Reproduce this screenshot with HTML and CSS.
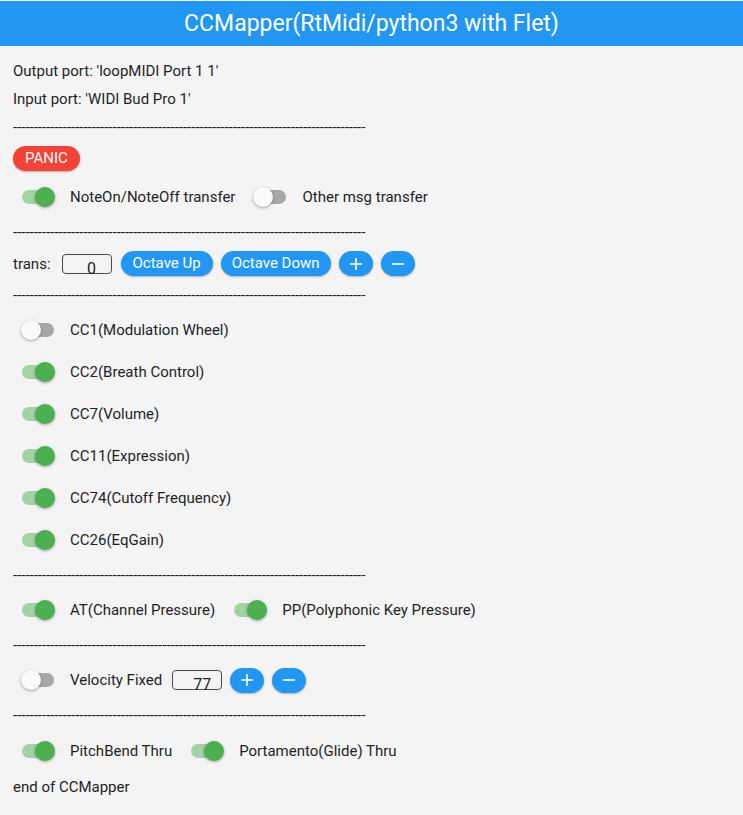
FILE: index.html
```html
<!DOCTYPE html>
<html lang="en">
<head>
<meta charset="utf-8">
<title>CCMapper</title>
<link rel="stylesheet" href="styles.css">
</head>
<body>
<div class="app">
  <header class="appbar"><h1 class="title">CCMapper(RtMidi/python3 with Flet)</h1></header>
  <main class="content">
    <div class="line">Output port: 'loopMIDI Port 1 1'</div>
    <div class="line">Input port: 'WIDI Bud Pro 1'</div>
    <div class="line dash">-------------------------------------------------------------------------------------</div>
    <div class="row"><button class="btn btn-red">PANIC</button></div>
    <div class="row srow">
      <label class="sw"><span class="track on"><span class="thumb"></span></span><span class="lbl">NoteOn/NoteOff transfer</span></label>
      <label class="sw"><span class="track"><span class="thumb"></span></span><span class="lbl">Other msg transfer</span></label>
    </div>
    <div class="line dash">-------------------------------------------------------------------------------------</div>
    <div class="row brow">
      <span class="txt trans">trans:</span>
      <span class="field field-trans">0</span>
      <button class="btn">Octave Up</button>
      <button class="btn btn-narrow">Octave Down</button>
      <button class="btn icon" aria-label="plus"><svg width="14" height="14" viewBox="0 0 14 14"><path d="M7 1v12M1 7h12" stroke="#fff" stroke-width="1.6"/></svg></button>
      <button class="btn icon" aria-label="minus"><svg width="14" height="14" viewBox="0 0 14 14"><path d="M1 7h12" stroke="#fff" stroke-width="1.6"/></svg></button>
    </div>
    <div class="line dash">-------------------------------------------------------------------------------------</div>
    <div class="row srow"><label class="sw"><span class="track"><span class="thumb"></span></span><span class="lbl">CC1(Modulation Wheel)</span></label></div>
    <div class="row srow"><label class="sw"><span class="track on"><span class="thumb"></span></span><span class="lbl">CC2(Breath Control)</span></label></div>
    <div class="row srow"><label class="sw"><span class="track on"><span class="thumb"></span></span><span class="lbl">CC7(Volume)</span></label></div>
    <div class="row srow"><label class="sw"><span class="track on"><span class="thumb"></span></span><span class="lbl">CC11(Expression)</span></label></div>
    <div class="row srow"><label class="sw"><span class="track on"><span class="thumb"></span></span><span class="lbl">CC74(Cutoff Frequency)</span></label></div>
    <div class="row srow"><label class="sw"><span class="track on"><span class="thumb"></span></span><span class="lbl">CC26(EqGain)</span></label></div>
    <div class="line dash">-------------------------------------------------------------------------------------</div>
    <div class="row srow">
      <label class="sw"><span class="track on"><span class="thumb"></span></span><span class="lbl">AT(Channel Pressure)</span></label>
      <label class="sw"><span class="track on"><span class="thumb"></span></span><span class="lbl">PP(Polyphonic Key Pressure)</span></label>
    </div>
    <div class="line dash">-------------------------------------------------------------------------------------</div>
    <div class="row srow vrow">
      <label class="sw"><span class="track"><span class="thumb"></span></span><span class="lbl">Velocity Fixed</span></label>
      <span class="field field-vel">77</span>
      <button class="btn icon" aria-label="plus"><svg width="14" height="14" viewBox="0 0 14 14"><path d="M7 1v12M1 7h12" stroke="#fff" stroke-width="1.6"/></svg></button>
      <button class="btn icon" aria-label="minus"><svg width="14" height="14" viewBox="0 0 14 14"><path d="M1 7h12" stroke="#fff" stroke-width="1.6"/></svg></button>
    </div>
    <div class="line dash">-------------------------------------------------------------------------------------</div>
    <div class="row srow tall">
      <label class="sw"><span class="track on"><span class="thumb"></span></span><span class="lbl">PitchBend Thru</span></label>
      <label class="sw"><span class="track on"><span class="thumb"></span></span><span class="lbl">Portamento(Glide) Thru</span></label>
    </div>
    <div class="line">end of CCMapper</div>
  </main>
</div>
</body>
</html>
```

FILE: styles.css
```css
* { box-sizing: border-box; }
html, body { margin: 0; padding: 0; }
body {
  background: #f4f4f4;
  font-family: Roboto, "Noto Sans", "Liberation Sans", sans-serif;
  font-size: 15px;
  color: #1f1f1f;
  width: 743px;
  height: 815px;
  overflow: hidden;
}
.app { padding-top: 1px; }
.appbar {
  height: 45px;
  background: #2196f3;
  display: flex;
  align-items: center;
  justify-content: center;
}
.title {
  margin: 0;
  font-size: 23px;
  font-weight: 400;
  color: #fff;
  line-height: 1;
}
.content {
  padding: 16px 13px 0 13px;
  display: flex;
  flex-direction: column;
  gap: 10px;
}
.line { height: 18px; line-height: 18px; white-space: nowrap; }
.dash { overflow: hidden; }
.row { display: flex; align-items: center; }
.srow { height: 32px; gap: 10px; }
.srow.tall { height: 34px; }
.brow { height: 25px; }
.txt { line-height: 18px; }
.trans { margin-right: 11px; }
.btn {
  font-family: inherit;
  font-size: 15px;
  font-weight: 400;
  color: #fff;
  background: #2196f3;
  border: 0;
  border-radius: 13px;
  height: 25px;
  padding: 0 12px;
  line-height: 25px;
  box-shadow: 0 1px 2px rgba(0,0,0,0.28);
  display: inline-flex;
  align-items: center;
  justify-content: center;
}
.btn-red { background: #f44336; padding: 0 12px; }
.btn-narrow { padding: 0 11px; }
.brow .btn { margin-left: 8px; }
.brow .field + .btn { margin-left: 9px; }
.icon { width: 34px; padding: 0; }
.field {
  width: 50px;
  height: 20px;
  border: 1px solid #4a4a4a;
  border-radius: 4px;
  font-size: 16px;
  line-height: 19px;
  padding-top: 4px;
  padding-left: 10px;
  text-align: center;
  color: #222;
  overflow: visible;
}
.vrow .btn { margin-left: -2px; }
.sw { display: flex; align-items: center; padding-left: 9px; }
.track {
  position: relative;
  width: 32px;
  height: 14px;
  border-radius: 7px;
  background: #a8a8a8;
}
.track.on { background: #a2d3a4; }
.thumb {
  position: absolute;
  top: -3px;
  left: -1px;
  width: 20px;
  height: 20px;
  border-radius: 50%;
  background: #fafafa;
  box-shadow: 0 1px 3px rgba(0,0,0,0.35);
}
.track.on .thumb { left: auto; right: -1px; background: #4caf50; }
.lbl { margin-left: 16px; white-space: nowrap; }
```
